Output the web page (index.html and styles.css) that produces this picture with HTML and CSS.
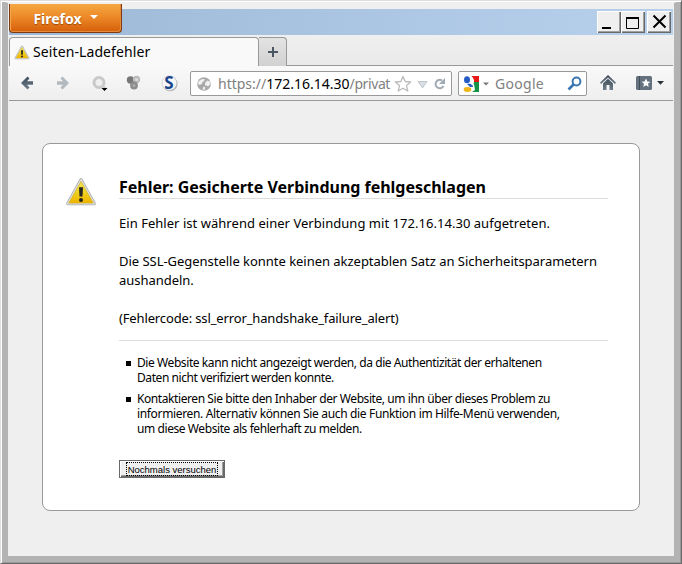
FILE: index.html
```html
<!DOCTYPE html>
<html lang="de">
<head>
<meta charset="utf-8">
<title>Seiten-Ladefehler</title>
<link rel="stylesheet" href="styles.css">
</head>
<body>
<svg class="defs" width="0" height="0">
  <defs>
    <linearGradient id="gold" x1="0" y1="0" x2="0" y2="1"><stop offset="0" stop-color="#f6e85c"/><stop offset=".55" stop-color="#edcf1d"/><stop offset="1" stop-color="#f0b400"/></linearGradient>
    <linearGradient id="slate" x1="0" y1="0" x2="0" y2="1"><stop offset="0" stop-color="#3f4b58"/><stop offset="1" stop-color="#70808f"/></linearGradient>
    <symbol id="warn" viewBox="0 0 32 28">
      <path d="M16 2 L29 25.500 H3 Z" fill="#aaa" stroke="#aaa" stroke-width="3.6" stroke-linejoin="round"/>
      <path d="M16 2 L29 25.500 H3 Z" fill="#dedede" stroke="#dedede" stroke-width="2" stroke-linejoin="round"/>
      <path d="M16 3.5 L28.200 25 H3.800 Z" fill="url(#gold)" stroke="#d2ae17" stroke-width=".7" stroke-linejoin="round"/>
      <path d="M14 9.3h4l-.5 9.2h-3z" fill="#24251f"/><circle cx="16" cy="22" r="2" fill="#24251f"/>
    </symbol>
  </defs>
</svg>
<div class="window">
  <header class="titlebar">
    <button class="firefox">Firefox<i class="tri"></i></button>
    <div class="controls">
      <button class="ctl"><svg width="24" height="22"><path d="M5 17h9" stroke="#000" stroke-width="2"/></svg></button>
      <button class="ctl"><svg width="24" height="22"><path d="M5.500 6v11.500h12V6" fill="none" stroke="#000"/><path d="M5 7h13" stroke="#000" stroke-width="2"/></svg></button>
      <button class="ctl close"><svg width="24" height="22"><path d="M6.500 4.500l12 12M18.500 4.500l-12 12" stroke="#000" stroke-width="2"/></svg></button>
    </div>
  </header>
  <nav class="tabs">
    <div class="tab"><svg class="tabicon" width="16" height="15"><use href="#warn"/></svg><span class="tabtext">Seiten-Ladefehler</span></div>
    <button class="newtab"><svg width="12" height="12"><path d="M6 1v10M1 6h10" stroke="#4a5663" stroke-width="2"/></svg></button>
  </nav>
  <div class="toolbar">
    <svg class="tools" width="180" height="34">
      <path d="M12 17L18.500 10.500L20.500 12.500L18 15.200H24V18.800H18L20.500 21.500L18.500 23.500Z" fill="url(#slate)"/>
      <path d="M60 17L53.500 10.500L51.500 12.500L54 15.200H48V18.800H54L51.500 21.500L53.500 23.500Z" fill="#b3babf"/>
      <circle cx="90" cy="16.500" r="5" fill="#eee" stroke="#c9c9c9" stroke-width="3"/><path d="M93 19l4 4" stroke="#ccc" stroke-width="2"/><path d="M92.500 22h6l-3 3z" fill="#000"/>
      <circle cx="121.500" cy="14" r="3.700" fill="#777"/><circle cx="127.500" cy="13.500" r="3.700" fill="#bbb"/><circle cx="125" cy="19.500" r="3.900" fill="#8c8c8c"/><circle cx="127.500" cy="13.500" r="1.600" fill="#ddd"/><circle cx="125" cy="19.500" r="1.600" fill="#aaa"/>
      <circle cx="161" cy="17.800" r="7.500" fill="#aaa"/><circle cx="160.300" cy="17" r="7.300" fill="#f7f7f7" stroke="#ccc" stroke-width=".7"/><text x="160" y="22.800" text-anchor="middle" class="sletter">S</text>
    </svg>
    <div class="field url">
      <svg width="14" height="14"><circle cx="7" cy="7" r="6.800" fill="#a8a8a8"/><path d="M2.500 3.500l2.500-1.500 3 .3-1 2-1.500.7L5 7 2 8 .8 6zM8 6l2-2.500 3 1v3l-2 2-1.500-1L8 8.500zM6.500 9.500l2 1-1 2.500-2-.5z" fill="#efefef"/></svg>
      <span class="address">https://<b>172.16.14.30</b><span class="path">/privat</span></span>
      <svg class="urlicons" width="53" height="22">
        <path d="M9 3.500l2.200 5 5.500.5-4.200 3.600 1.300 5.400L9 15.200 4.200 18l1.300-5.400L1.300 9l5.500-.5z" fill="#fff" stroke="#bbb" stroke-width="1.300" stroke-linejoin="round"/>
        <path d="M24 8.500h9l-4.500 6.500z" fill="#d8dfe4" stroke="#b4bdc5" stroke-width=".8"/>
        <path d="M48 7.500A4.200 4.200 0 1 0 49.500 13" fill="none" stroke="#a0aab4" stroke-width="2"/><path d="M51 5v6h-6z" fill="#a0aab4"/>
      </svg>
    </div>
    <div class="field search">
      <svg width="32" height="22"><path d="M9 3h8v6H11z" fill="#e71916"/><path d="M12 9h5v10H9z" fill="#149347"/><path d="M4 15l8-4 1 6-3 2H4z" fill="#fff"/><ellipse cx="5" cy="6.800" rx="3" ry="3.500" fill="#245bc4"/><path d="M5 11c4-1 6 0 6 3H8z" fill="#245bc4"/><path d="M8 3c3 2 4 5 2 9" fill="none" stroke="#fff" stroke-width="1.800"/><ellipse cx="5.500" cy="16.500" rx="3.800" ry="2.400" fill="#f1b51b"/><path d="M21 9.500h6l-3 3z" fill="#777"/></svg>
      <span class="engine">Google</span>
      <svg width="16" height="22"><circle cx="9.500" cy="8.500" r="3.900" fill="none" stroke="#3a76b0" stroke-width="2"/><path d="M6.500 11.500L1.500 16.500" stroke="#3a76b0" stroke-width="2.600"/></svg>
    </div>
    <svg class="right" width="86" height="34">
      <path d="M13.500 17.300L21 10.300L28.500 17.300" fill="none" stroke="url(#slate)" stroke-width="1.800"/><path d="M16 17.500l5-4.700 5 4.700v6.500h-3.500v-5h-3v5H16z" fill="url(#slate)"/>
      <rect x="49" y="10" width="16" height="14" rx="1.500" fill="#65717e"/><path d="M52.500 10v14" stroke="#414d59"/><path d="M59 12.500l1.300 2.900 3.100.3-2.400 2.100.7 3.200-2.700-1.700-2.700 1.700.7-3.200-2.400-2.100 3.100-.3z" fill="#fff"/>
      <path d="M70 15h7l-3.500 3.800z" fill="#29323a"/>
    </svg>
  </div>
  <main class="page">
    <section class="card">
      <svg class="bigwarn" width="32" height="28"><use href="#warn"/></svg>
      <div class="content">
        <h1>Fehler: Gesicherte Verbindung fehlgeschlagen</h1>
        <div class="desc">
          <p class="host">Ein Fehler ist während einer Verbindung mit 172.16.14.30 aufgetreten.</p>
          <p class="reason">Die SSL-Gegenstelle konnte keinen akzeptablen Satz an Sicherheitsparametern<br>aushandeln.</p>
          <p class="code">(Fehlercode: ssl_error_handshake_failure_alert)</p>
        </div>
        <ul>
          <li>Die Website kann nicht angezeigt werden, da die Authentizität der erhaltenen<br>Daten nicht verifiziert werden konnte.</li>
          <li>Kontaktieren Sie bitte den Inhaber der Website, um ihn über dieses Problem zu<br><span class="wide">informieren. Alternativ können Sie auch die Funktion im Hilfe-Menü verwenden,</span><br>um diese Website als fehlerhaft zu melden.</li>
        </ul>
        <button class="retry"><span>Nochmals versuchen</span></button>
      </div>
    </section>
  </main>
</div>
</body>
</html>
```
FILE: styles.css
```css
* { box-sizing: border-box; }
body { margin: 0; font-family: "Noto Sans", "Open Sans", sans-serif; color: #000; background: #efefef; overflow: hidden; }
svg { display: block; flex: none; }
.defs { position: absolute; }
button { font-family: inherit; padding: 0; margin: 0; }
.window {
  width: 682px; height: 564px; background: #efefef;
  border: solid; border-width: 3px 8px 8px 8px; border-color: #efefef #b3b3b3 #b3b3b3;
  padding: 0 1px;
  position: relative;
}
.window::before { content: ""; position: absolute; inset: -3px -8px -8px; border: 1px solid; border-color: #dedede #6a6a6a #6a6a6a #dedede; box-shadow: inset 1px 1px #fff, inset -1px -1px #999; pointer-events: none; }
.titlebar {
  height: 32px; display: flex; justify-content: space-between; align-items: flex-start;
  background: linear-gradient(#efefef 6px, transparent 6px), linear-gradient(90deg, #9db8d6, #b7d1ed);
}
.firefox {
  width: 113px; height: 29px; margin-top: 1px; border: 1px solid #7d3a0e; border-top: 0; border-radius: 0 0 4px 4px;
  background: linear-gradient(#f5a842, #ed8a28 45%, #d55f0a); box-shadow: inset 1px 0 #f3a552, inset -1px -1px #e58a3d;
  color: #fff; font-weight: bold; font-size: 14px; line-height: 25px;
  display: flex; justify-content: center; align-items: center; gap: 8px; text-shadow: 0 1px 1px #9c4a0c;
}
.tri { border: 4px solid transparent; border-top-color: #fff; border-bottom: 0; margin-top: -3px; }
.controls { display: flex; margin: 8px 2px 0 0; }
.ctl { width: 24px; height: 22px; background: #efefef; border: 0; box-shadow: inset 1px 1px #fff, inset -1px -1px #696969, inset -2px -2px #a0a0a0; }
.close { margin-left: 2px; }
.tabs { height: 31px; padding-top: 2px; display: flex; background: linear-gradient(#efefef, #eaeaea); border-bottom: 1px solid #999; }
.tab { width: 250px; height: 29px; border: 1px solid #999; border-bottom: 0; border-radius: 4px 4px 0 0; background: #f9f9f9; display: flex; align-items: center; padding-left: 4px; gap: 3px; }
.tabtext { font-size: 14px; line-height: 20px; letter-spacing: .1px; white-space: nowrap; }
.newtab { width: 28px; height: 29px; border: 1px solid #999; border-left: 0; border-bottom: 0; border-radius: 0 4px 0 0; background: linear-gradient(#e3e3e3, #d1d1d1); display: grid; place-items: center; }
.toolbar { height: 35px; border-bottom: 1px solid #999; background: linear-gradient(#f9f9f9, #eee); display: flex; align-items: flex-start; }
.field { height: 25px; margin-top: 5px; border: 1px solid #999; border-radius: 2px; background: #fff; display: flex; align-items: center; font-size: 14px; color: #808080; }
.url { width: 262px; margin-left: 1px; padding-left: 6px; }
.address { width: 176px; margin-left: 7px; white-space: nowrap; }
.address b { font-weight: normal; color: #000; }
.path { letter-spacing: -.4px; }
.search { width: 129px; margin-left: 6px; padding-left: 3px; }
.engine { width: 72px; margin-left: 1px; letter-spacing: .3px; }
.sletter { font: bold 17px "Noto Sans", sans-serif; fill: #17468f; }
.page { padding: 42px 33px 0; }
.card { height: 368px; border: 1px solid #999; border-radius: 8px; background: #fff; display: flex; padding: 34px 31px 0 22px; }
.content { width: 489px; margin-left: 22px; }
h1 { margin: 0; height: 21px; border-bottom: 1px solid #ddd; font-size: 16px; line-height: 19px; letter-spacing: -.02px; white-space: nowrap; }
.desc { height: 142px; padding-top: 15px; border-bottom: 1px solid #ddd; font-size: 13px; line-height: 19px; white-space: nowrap; }
.desc p { margin: 0 0 19px; }
.host { letter-spacing: .035px; }
.reason { letter-spacing: -.03px; }
.code { letter-spacing: -.14px; }
ul { list-style: none; margin: 14px 0 0; padding: 0 0 0 18px; font-size: 12px; line-height: 15px; letter-spacing: -.42px; white-space: nowrap; }
.wide { letter-spacing: -.34px; }
li { margin-bottom: 6px; }
li::before { content: ""; float: left; width: 5px; height: 5px; margin: 6px 0 0 -11px; background: #000; }
.retry { width: 106px; height: 18px; margin-top: 24px; display: block; background: #efefef; border: 1px solid #696969; box-shadow: inset 1px 1px #fff, inset -1px -1px #696969, inset -2px -2px #a0a0a0; }
.retry span { display: block; width: 92px; height: 14px; margin-left: 6px; border: 1px dotted #000; font: 9.500px/13px "Liberation Sans", sans-serif; white-space: nowrap; }
```
